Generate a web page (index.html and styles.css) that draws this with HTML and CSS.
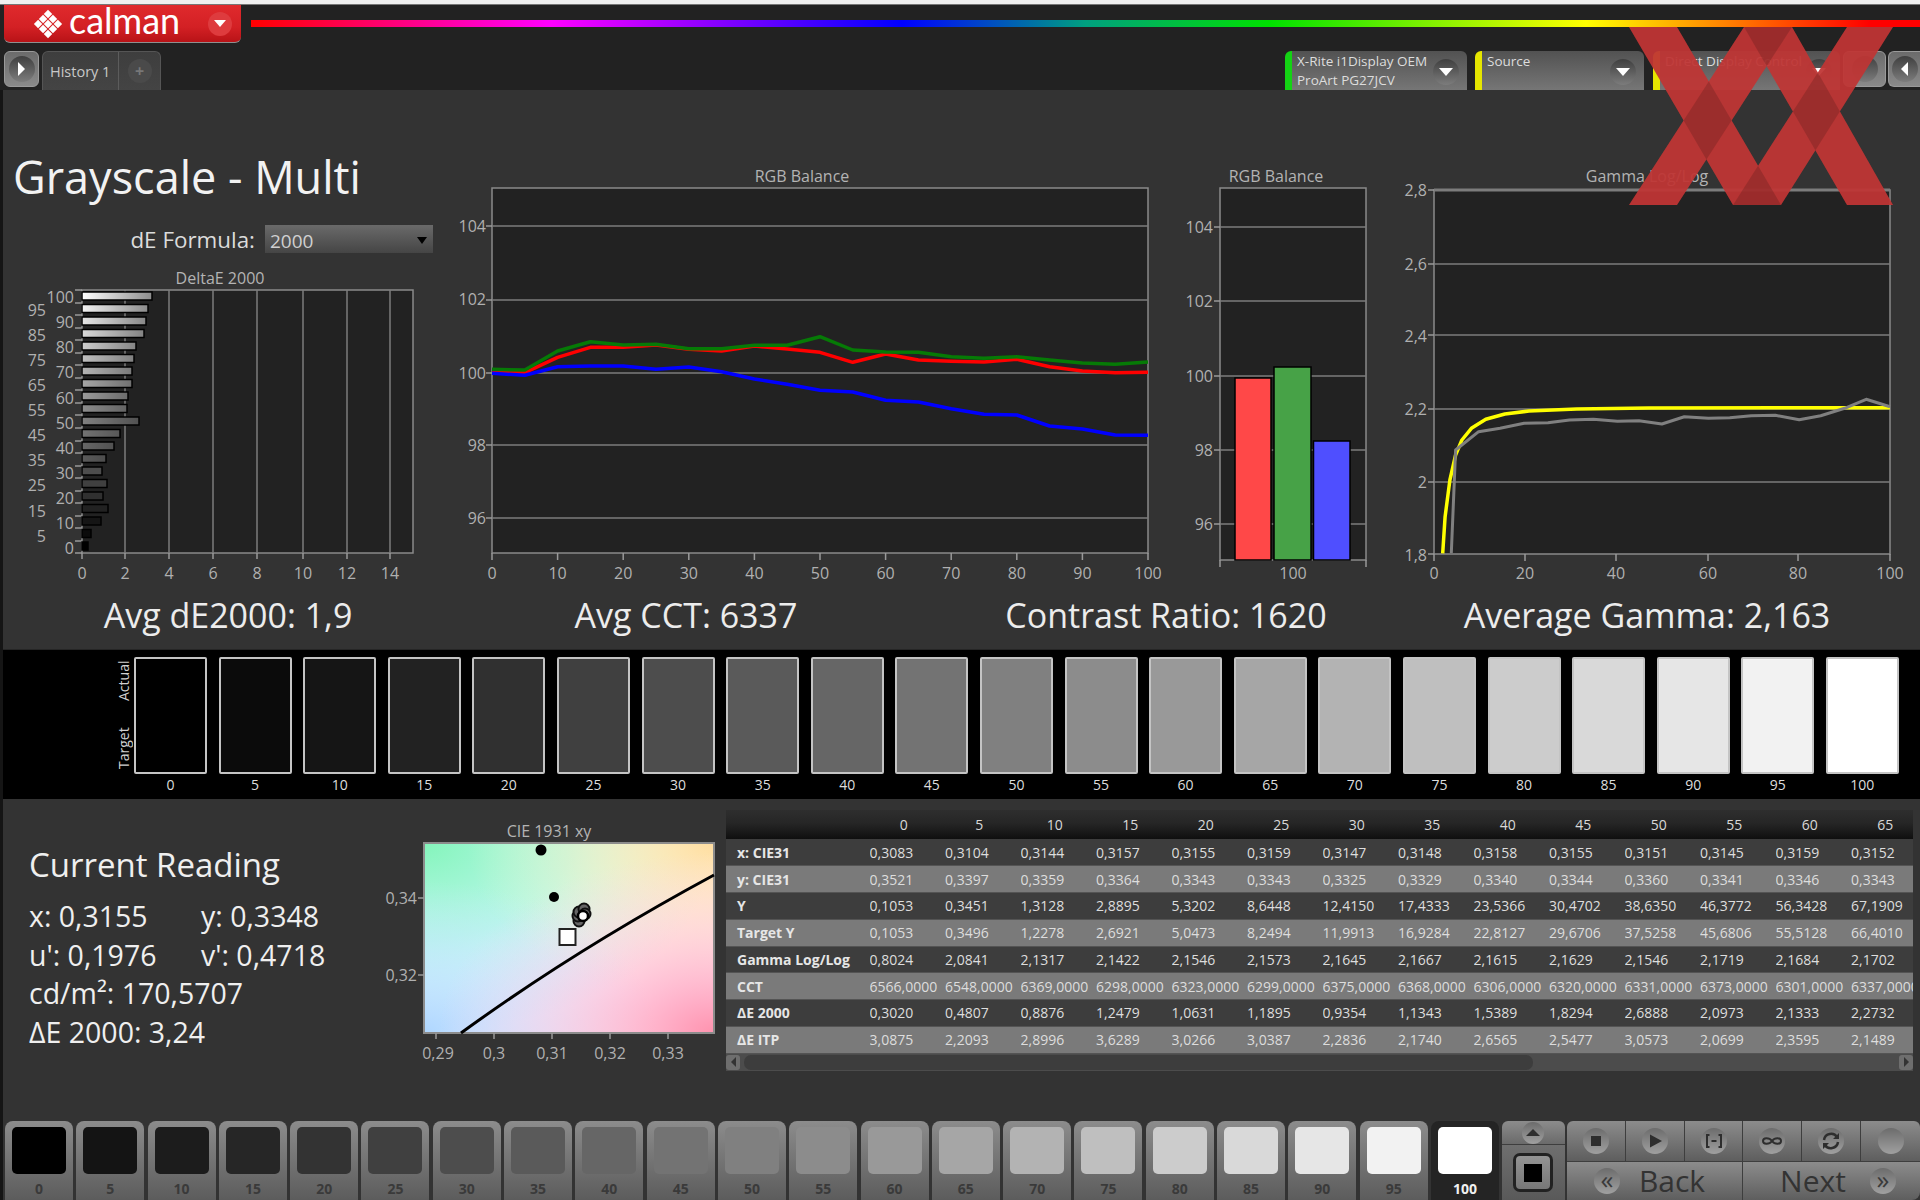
FILE: index.html
```html
<!DOCTYPE html>
<html>

<head>
  <meta charset="utf-8" />
  <title>Calman - Grayscale Multi</title>
  <link rel="stylesheet" href="styles.css">
</head>

<body>
  <div class="top-strip"></div>

  <div class="header-sec">
    <div class="logo-row">
      <div class="logo">
        <svg class="logo-mark" viewBox="0 0 30 30">
          <g transform="rotate(45 15 15)" fill="#ffffff">
            <rect x="5" y="5" width="6" height="6" />
            <rect x="12" y="5" width="6" height="6" />
            <rect x="19" y="5" width="6" height="6" />
            <rect x="5" y="12" width="6" height="6" />
            <rect x="12" y="12" width="6" height="6" />
            <rect x="19" y="12" width="6" height="6" />
            <rect x="5" y="19" width="6" height="6" />
            <rect x="12" y="19" width="6" height="6" />
            <rect x="19" y="19" width="6" height="6" />
          </g>
        </svg>
        <span class="logo-text">calman</span>
        <span class="logo-drop"><i class="caret-down white"></i></span>
      </div>
      <div class="rainbow"></div>
    </div>
    <div class="tab-row">
      <div class="side-button"><span class="knob"><i class="caret-right"></i></span></div>
      <div class="history-tab">
        <span class="history-name">History 1</span>
        <span class="history-add"><span class="add-knob">+</span></span>
      </div>
      <div class="device green wide">
        <div class="device-text">X-Rite i1Display OEM<br>ProArt PG27JCV</div>
        <span class="knob"><i class="caret-down white"></i></span>
      </div>
      <div class="device yellow mid">
        <div class="device-text">Source</div>
        <span class="knob"><i class="caret-down white"></i></span>
      </div>
      <div class="device yellow wider">
        <div class="device-text">Direct Display Control</div>
        <span class="knob"><i class="caret-down white"></i></span>
      </div>
      <div class="side-button gear"><span class="knob"></span></div>
      <div class="side-button back"><span class="knob"><i class="caret-left"></i></span></div>
    </div>
  </div>

  <div class="content">
    <div class="charts">
      <div class="left-col">
        <h1 class="page-title">Grayscale - Multi</h1>
        <div class="formula-row">
          <span class="formula-label">dE Formula:</span>
          <div class="formula-select">2000<i class="caret-down black"></i></div>
        </div>
        <svg class="chart delta-chart" viewBox="3 265 453 330">
          <defs>
            <linearGradient id="fade" gradientUnits="userSpaceOnUse" x1="82" y1="0" x2="152" y2="0">
              <stop offset="0" stop-color="#000" stop-opacity="0" />
              <stop offset="1" stop-color="#000" stop-opacity=".45" />
            </linearGradient>
          </defs>
          <text class="chart-title" x="220" y="284">DeltaE 2000</text>
          <rect class="plot" x="82" y="290" width="331" height="263" />
          <path class="grid" d="M125 290V553M169 290V553M213 290V553M257 290V553M303 290V553M347 290V553M390 290V553" />
          <path class="tick" d="M82 553v6M125 553v6M169 553v6M213 553v6M257 553v6M303 553v6M347 553v6M390 553v6" />
          <path class="tick" d="M75 290h7M75 303h7M75 315h7M75 328h7M75 340h7M75 353h7M75 365h7M75 378h7M75 390h7M75 403h7M75 415h7M75 428h7M75 441h7M75 453h7M75 466h7M75 478h7M75 491h7M75 503h7M75 516h7M75 528h7M75 541h7M75 553h7" />
          <g class="bars">
            <rect x="82" y="292" width="70" height="8" fill="#ffffff" />
            <rect x="82" y="304.5" width="66" height="8" fill="#f2f2f2" />
            <rect x="82" y="317" width="64" height="8" fill="#e6e6e6" />
            <rect x="82" y="329.5" width="62" height="8" fill="#d9d9d9" />
            <rect x="82" y="342" width="54" height="8" fill="#cccccc" />
            <rect x="82" y="354.5" width="52" height="8" fill="#bfbfbf" />
            <rect x="82" y="367" width="50" height="8" fill="#b3b3b3" />
            <rect x="82" y="379.5" width="50" height="8" fill="#a6a6a6" />
            <rect x="82" y="392" width="46" height="8" fill="#999999" />
            <rect x="82" y="404.5" width="45" height="8" fill="#8c8c8c" />
            <rect x="82" y="417" width="57" height="8" fill="#808080" />
            <rect x="82" y="429.5" width="38" height="8" fill="#737373" />
            <rect x="82" y="442" width="32" height="8" fill="#666666" />
            <rect x="82" y="454.5" width="24" height="8" fill="#5a5a5a" />
            <rect x="82" y="467" width="20" height="8" fill="#4d4d4d" />
            <rect x="82" y="479.5" width="25" height="8" fill="#404040" />
            <rect x="82" y="492" width="21" height="8" fill="#303030" />
            <rect x="82" y="504.5" width="26" height="8" fill="#222222" />
            <rect x="82" y="517" width="19" height="8" fill="#151515" />
            <rect x="82" y="529.5" width="9" height="8" fill="#0b0b0b" />
            <rect x="82" y="542" width="6" height="8" fill="#000000" />
          </g>
          <path fill="url(#fade)" d="M82 292h70v8h-70zM82 304.5h66v8h-66zM82 317h64v8h-64zM82 329.5h62v8h-62zM82 342h54v8h-54zM82 354.5h52v8h-52zM82 367h50v8h-50zM82 379.5h50v8h-50zM82 392h46v8h-46zM82 404.5h45v8h-45zM82 417h57v8h-57zM82 429.5h38v8h-38zM82 442h32v8h-32zM82 454.5h24v8h-24z" />
          <g class="axis-end">
            <text x="74" y="303">100</text>
            <text x="46" y="316">95</text>
            <text x="74" y="328">90</text>
            <text x="46" y="341">85</text>
            <text x="74" y="353">80</text>
            <text x="46" y="366">75</text>
            <text x="74" y="378">70</text>
            <text x="46" y="391">65</text>
            <text x="74" y="404">60</text>
            <text x="46" y="416">55</text>
            <text x="74" y="429">50</text>
            <text x="46" y="441">45</text>
            <text x="74" y="454">40</text>
            <text x="46" y="466">35</text>
            <text x="74" y="479">30</text>
            <text x="46" y="491">25</text>
            <text x="74" y="504">20</text>
            <text x="46" y="517">15</text>
            <text x="74" y="529">10</text>
            <text x="46" y="542">5</text>
            <text x="74" y="554">0</text>
          </g>
          <g class="axis-mid">
            <text x="82" y="579">0</text>
            <text x="125" y="579">2</text>
            <text x="169" y="579">4</text>
            <text x="213" y="579">6</text>
            <text x="257" y="579">8</text>
            <text x="303" y="579">10</text>
            <text x="347" y="579">12</text>
            <text x="390" y="579">14</text>
          </g>
        </svg>
      </div>

      <svg class="chart line-chart" viewBox="456 165 714 430">
        <text class="chart-title" x="802" y="182">RGB Balance</text>
        <rect class="plot" x="492" y="188" width="656" height="365" />
        <path class="grid" d="M492 226H1148M492 300H1148M492 373H1148M492 445H1148M492 518H1148" />
        <path class="tick" d="M492 553v7M557.6 553v7M623.2 553v7M688.8 553v7M754.4 553v7M820 553v7M885.6 553v7M951.2 553v7M1016.8 553v7M1082.4 553v7M1148 553v7M486 226h6M486 300h6M486 373h6M486 445h6M486 518h6" />
        <polyline class="curve red" points="492,372.7 524.8,372.7 557.6,357.3 590.4,347.3 623.2,347.3 656,345 688.8,349.3 721.6,351 754.4,346 787.2,349 820,352.3 852.8,362.3 885.6,354 918.4,360 951.2,361.3 984,362 1016.8,359.3 1049.6,366.7 1082.4,371 1115.2,372.7 1148,372.3" />
        <polyline class="curve green" points="492,369.3 524.8,370 557.6,351 590.4,341.7 623.2,345 656,344.3 688.8,348.7 721.6,348.7 754.4,345.3 787.2,345.3 820,336.7 852.8,350 885.6,352 918.4,352.3 951.2,356.7 984,358.3 1016.8,356.7 1049.6,360 1082.4,363 1115.2,364.3 1148,362" />
        <polyline class="curve blue" points="492,373.3 524.8,375.3 557.6,366.7 590.4,366 623.2,366 656,369.3 688.8,367 721.6,371.7 754.4,379 787.2,384.3 820,390.3 852.8,392 885.6,400.3 918.4,402 951.2,408.7 984,414.3 1016.8,415 1049.6,426 1082.4,429 1115.2,435 1148,435.3" />
        <g class="axis-end">
          <text x="486" y="232">104</text>
          <text x="486" y="305">102</text>
          <text x="486" y="379">100</text>
          <text x="486" y="451">98</text>
          <text x="486" y="524">96</text>
        </g>
        <g class="axis-mid">
          <text x="492" y="579">0</text>
          <text x="557.6" y="579">10</text>
          <text x="623.2" y="579">20</text>
          <text x="688.8" y="579">30</text>
          <text x="754.4" y="579">40</text>
          <text x="820" y="579">50</text>
          <text x="885.6" y="579">60</text>
          <text x="951.2" y="579">70</text>
          <text x="1016.8" y="579">80</text>
          <text x="1082.4" y="579">90</text>
          <text x="1148" y="579">100</text>
        </g>
      </svg>

      <svg class="chart bar-chart" viewBox="1170 165 230 430">
        <text class="chart-title" x="1276" y="182">RGB Balance</text>
        <rect class="plot" x="1220" y="188" width="146" height="372" />
        <path class="grid" d="M1220 227H1366M1220 301H1366M1220 376H1366M1220 450H1366M1220 524H1366" />
        <path class="tick" d="M1220 560v7M1366 560v7M1214 227h6M1214 301h6M1214 376h6M1214 450h6M1214 524h6" />
        <rect class="rgb-bar" x="1235" y="378" width="36" height="182" fill="#ff4848" />
        <rect class="rgb-bar" x="1274" y="367" width="37" height="193" fill="#47a247" />
        <rect class="rgb-bar" x="1313.5" y="441" width="36.5" height="119" fill="#4f4fff" />
        <g class="axis-end">
          <text x="1213" y="233">104</text>
          <text x="1213" y="307">102</text>
          <text x="1213" y="382">100</text>
          <text x="1213" y="456">98</text>
          <text x="1213" y="530">96</text>
        </g>
        <text class="axis-one" x="1293" y="579">100</text>
      </svg>

      <svg class="chart gamma-chart" viewBox="1400 165 520 430">
        <text class="chart-title" x="1647" y="182">Gamma Log/Log</text>
        <rect class="plot" x="1434" y="190" width="456" height="364" />
        <path class="grid" d="M1434 264H1890M1434 335H1890M1434 409H1890M1434 482H1890" />
        <path class="grid thick" d="M1434 190H1890" />
        <path class="tick" d="M1434 554v7M1525 554v7M1616 554v7M1708 554v7M1798 554v7M1890 554v7M1428 190h6M1428 264h6M1428 335h6M1428 409h6M1428 482h6M1428 554h6" />
        <polyline class="curve yellow-line" points="1442.7,553.3 1445.1,516.7 1449.9,480 1455.6,455 1461.9,440 1471.4,428.3 1485.8,419.3 1504.9,414 1528.9,411 1576.7,409 1648.5,408 1890,407.7" />
        <polyline class="curve gray-line" points="1451.3,553.3 1455.6,450 1478.6,431.7 1500.1,428.3 1524.1,423.3 1548,422.7 1569.5,420 1593.4,419.3 1617.4,421.3 1638.9,420.7 1661.9,424 1684.3,416.7 1708.3,418.3 1729.8,417.7 1751.3,415.7 1775.3,415.3 1799.2,419.7 1820.7,415.7 1844.6,408.3 1866.2,399.3 1890,406.7" />
        <g class="axis-end">
          <text x="1427" y="196">2,8</text>
          <text x="1427" y="270">2,6</text>
          <text x="1427" y="342">2,4</text>
          <text x="1427" y="415">2,2</text>
          <text x="1427" y="488">2</text>
          <text x="1427" y="561">1,8</text>
        </g>
        <g class="axis-mid">
          <text x="1434" y="579">0</text>
          <text x="1525" y="579">20</text>
          <text x="1616" y="579">40</text>
          <text x="1708" y="579">60</text>
          <text x="1798" y="579">80</text>
          <text x="1890" y="579">100</text>
        </g>
      </svg>
    </div>

    <div class="stats">
      <div>Avg dE2000: 1,9</div>
      <div>Avg CCT: 6337</div>
      <div>Contrast Ratio: 1620</div>
      <div>Average Gamma: 2,163</div>
    </div>

    <div class="swatch-band">
      <div class="swatch-side"><div class="side-text"><span>Target</span><span>Actual</span></div></div>
      <div class="swatch"><div class="swatch-box" style="background:#000000"></div>0</div>
      <div class="swatch"><div class="swatch-box" style="background:#0b0b0b"></div>5</div>
      <div class="swatch"><div class="swatch-box" style="background:#151515"></div>10</div>
      <div class="swatch"><div class="swatch-box" style="background:#222222"></div>15</div>
      <div class="swatch"><div class="swatch-box" style="background:#303030"></div>20</div>
      <div class="swatch"><div class="swatch-box" style="background:#404040"></div>25</div>
      <div class="swatch"><div class="swatch-box" style="background:#4d4d4d"></div>30</div>
      <div class="swatch"><div class="swatch-box" style="background:#5a5a5a"></div>35</div>
      <div class="swatch"><div class="swatch-box" style="background:#666666"></div>40</div>
      <div class="swatch"><div class="swatch-box" style="background:#737373"></div>45</div>
      <div class="swatch"><div class="swatch-box" style="background:#808080"></div>50</div>
      <div class="swatch"><div class="swatch-box" style="background:#8c8c8c"></div>55</div>
      <div class="swatch"><div class="swatch-box" style="background:#999999"></div>60</div>
      <div class="swatch"><div class="swatch-box" style="background:#a6a6a6"></div>65</div>
      <div class="swatch"><div class="swatch-box" style="background:#b3b3b3"></div>70</div>
      <div class="swatch"><div class="swatch-box" style="background:#bfbfbf"></div>75</div>
      <div class="swatch"><div class="swatch-box" style="background:#cccccc"></div>80</div>
      <div class="swatch"><div class="swatch-box" style="background:#d9d9d9"></div>85</div>
      <div class="swatch"><div class="swatch-box" style="background:#e6e6e6"></div>90</div>
      <div class="swatch"><div class="swatch-box" style="background:#f2f2f2"></div>95</div>
      <div class="swatch"><div class="swatch-box" style="background:#ffffff"></div>100</div>
    </div>

    <div class="lower">
      <div class="reading">
        <h2 class="reading-title">Current Reading</h2>
        <div class="reading-grid">
          <span>x: 0,3155</span><span>y: 0,3348</span>
          <span>u': 0,1976</span><span>v': 0,4718</span>
          <span class="span-two">cd/m²: 170,5707</span>
          <span class="span-two">ΔE 2000: 3,24</span>
        </div>
      </div>

      <svg class="chart cie-chart" viewBox="370 820 350 250">
        <defs>
          <radialGradient id="c-tl" cx="0" cy="0" r="1">
            <stop offset="0" stop-color="#84f5bb" />
            <stop offset=".5" stop-color="#a6f5e2" stop-opacity=".8" />
            <stop offset="1" stop-color="#a8f5ff" stop-opacity="0" />
          </radialGradient>
          <radialGradient id="c-tr" cx="1" cy="0" r=".85">
            <stop offset="0" stop-color="#ffdda0" />
            <stop offset="1" stop-color="#fffbc0" stop-opacity="0" />
          </radialGradient>
          <radialGradient id="c-br" cx="1" cy="1" r=".95">
            <stop offset="0" stop-color="#ff92ae" />
            <stop offset="1" stop-color="#ffc8f0" stop-opacity="0" />
          </radialGradient>
          <radialGradient id="c-bl" cx="0" cy="1" r=".8">
            <stop offset="0" stop-color="#aed6ff" />
            <stop offset="1" stop-color="#c8e8ff" stop-opacity="0" />
          </radialGradient>
        </defs>
        <text class="chart-title" x="549" y="837">CIE 1931 xy</text>
        <rect x="424" y="843" width="290" height="190" fill="#ffffff" />
        <rect x="424" y="843" width="290" height="190" fill="url(#c-tl)" />
        <rect x="424" y="843" width="290" height="190" fill="url(#c-tr)" />
        <rect x="424" y="843" width="290" height="190" fill="url(#c-bl)" />
        <rect x="424" y="843" width="290" height="190" fill="url(#c-br)" />
        <rect class="cie-frame" x="424" y="843" width="290" height="190" />
        <path class="cie-line" d="M461 1033Q575 950 714 875" />
        <circle cx="541" cy="850" r="5.5" fill="#000" />
        <circle cx="554" cy="897" r="5" fill="#000" />
        <g class="cie-cluster">
          <circle cx="579" cy="921" r="5.5" />
          <circle cx="578" cy="916" r="5.5" />
          <circle cx="579" cy="912" r="5.5" />
          <circle cx="584" cy="909" r="5.5" />
          <circle cx="585" cy="914" r="5.5" />
        </g>
        <circle cx="583" cy="916" r="5" fill="#fff" stroke="#000" stroke-width="2.5" />
        <rect x="559.5" y="929" width="16" height="16" fill="#fff" stroke="#222" stroke-width="2" />
        <path class="tick" d="M418 898h6M418 975h6M436 1033v6M494 1033v6M552 1033v6M610 1033v6M668 1033v6" />
        <g class="axis-end">
          <text x="417" y="904">0,34</text>
          <text x="417" y="981">0,32</text>
        </g>
        <g class="axis-mid">
          <text x="438" y="1059">0,29</text>
          <text x="494" y="1059">0,3</text>
          <text x="552" y="1059">0,31</text>
          <text x="610" y="1059">0,32</text>
          <text x="668" y="1059">0,33</text>
        </g>
      </svg>

      <div class="table-wrap">
        <div class="table-clip">
          <table class="data-table">
            <thead>
              <tr><th></th><th>0</th><th>5</th><th>10</th><th>15</th><th>20</th><th>25</th><th>30</th><th>35</th><th>40</th><th>45</th><th>50</th><th>55</th><th>60</th><th>65</th></tr>
            </thead>
            <tbody>
              <tr><td>x: CIE31</td><td>0,3083</td><td>0,3104</td><td>0,3144</td><td>0,3157</td><td>0,3155</td><td>0,3159</td><td>0,3147</td><td>0,3148</td><td>0,3158</td><td>0,3155</td><td>0,3151</td><td>0,3145</td><td>0,3159</td><td>0,3152</td></tr>
              <tr><td>y: CIE31</td><td>0,3521</td><td>0,3397</td><td>0,3359</td><td>0,3364</td><td>0,3343</td><td>0,3343</td><td>0,3325</td><td>0,3329</td><td>0,3340</td><td>0,3344</td><td>0,3360</td><td>0,3341</td><td>0,3346</td><td>0,3343</td></tr>
              <tr><td>Y</td><td>0,1053</td><td>0,3451</td><td>1,3128</td><td>2,8895</td><td>5,3202</td><td>8,6448</td><td>12,4150</td><td>17,4333</td><td>23,5366</td><td>30,4702</td><td>38,6350</td><td>46,3772</td><td>56,3428</td><td>67,1909</td></tr>
              <tr><td>Target Y</td><td>0,1053</td><td>0,3496</td><td>1,2278</td><td>2,6921</td><td>5,0473</td><td>8,2494</td><td>11,9913</td><td>16,9284</td><td>22,8127</td><td>29,6706</td><td>37,5258</td><td>45,6806</td><td>55,5128</td><td>66,4010</td></tr>
              <tr><td>Gamma Log/Log</td><td>0,8024</td><td>2,0841</td><td>2,1317</td><td>2,1422</td><td>2,1546</td><td>2,1573</td><td>2,1645</td><td>2,1667</td><td>2,1615</td><td>2,1629</td><td>2,1546</td><td>2,1719</td><td>2,1684</td><td>2,1702</td></tr>
              <tr><td>CCT</td><td>6566,0000</td><td>6548,0000</td><td>6369,0000</td><td>6298,0000</td><td>6323,0000</td><td>6299,0000</td><td>6375,0000</td><td>6368,0000</td><td>6306,0000</td><td>6320,0000</td><td>6331,0000</td><td>6373,0000</td><td>6301,0000</td><td>6337,0000</td></tr>
              <tr><td>ΔE 2000</td><td>0,3020</td><td>0,4807</td><td>0,8876</td><td>1,2479</td><td>1,0631</td><td>1,1895</td><td>0,9354</td><td>1,1343</td><td>1,5389</td><td>1,8294</td><td>2,6888</td><td>2,0973</td><td>2,1333</td><td>2,2732</td></tr>
              <tr><td>ΔE ITP</td><td>3,0875</td><td>2,2093</td><td>2,8996</td><td>3,6289</td><td>3,0266</td><td>3,0387</td><td>2,2836</td><td>2,1740</td><td>2,6565</td><td>2,5477</td><td>3,0573</td><td>2,0699</td><td>2,3595</td><td>2,1489</td></tr>
            </tbody>
          </table>
        </div>
        <div class="scroll-bar">
          <span class="scroll-end"><i class="caret-left small"></i></span>
          <span class="scroll-track"><span class="scroll-thumb"></span></span>
          <span class="scroll-end"><i class="caret-right small"></i></span>
        </div>
      </div>
    </div>

    <div class="footer">
      <div class="steps">
        <div class="step"><div class="step-box" style="background:#000000"></div>0</div>
        <div class="step"><div class="step-box" style="background:#141414"></div>5</div>
        <div class="step"><div class="step-box" style="background:#1c1c1c"></div>10</div>
        <div class="step"><div class="step-box" style="background:#262626"></div>15</div>
        <div class="step"><div class="step-box" style="background:#333333"></div>20</div>
        <div class="step"><div class="step-box" style="background:#404040"></div>25</div>
        <div class="step"><div class="step-box" style="background:#4d4d4d"></div>30</div>
        <div class="step"><div class="step-box" style="background:#5a5a5a"></div>35</div>
        <div class="step"><div class="step-box" style="background:#666666"></div>40</div>
        <div class="step"><div class="step-box" style="background:#737373"></div>45</div>
        <div class="step"><div class="step-box" style="background:#808080"></div>50</div>
        <div class="step"><div class="step-box" style="background:#8c8c8c"></div>55</div>
        <div class="step"><div class="step-box" style="background:#999999"></div>60</div>
        <div class="step"><div class="step-box" style="background:#a6a6a6"></div>65</div>
        <div class="step"><div class="step-box" style="background:#b3b3b3"></div>70</div>
        <div class="step"><div class="step-box" style="background:#bfbfbf"></div>75</div>
        <div class="step"><div class="step-box" style="background:#cccccc"></div>80</div>
        <div class="step"><div class="step-box" style="background:#d9d9d9"></div>85</div>
        <div class="step"><div class="step-box" style="background:#e6e6e6"></div>90</div>
        <div class="step"><div class="step-box" style="background:#f2f2f2"></div>95</div>
        <div class="step active"><div class="step-box" style="background:#ffffff"></div>100</div>
      </div>
      <div class="ctl-col">
        <div class="ctl-up"><span class="ctl-knob small-knob"><i class="caret-up"></i></span></div>
        <div class="ctl-record"><span class="record-frame"><span class="record-dot"></span></span></div>
      </div>
      <div class="ctl-panel">
        <div class="ctl-top">
          <div class="ctl-btn"><span class="ctl-knob"><svg viewBox="0 0 26 26"><rect x="8" y="8" width="10" height="10" fill="#2e2e2e" /></svg></span></div>
          <div class="ctl-btn"><span class="ctl-knob"><svg viewBox="0 0 26 26"><path d="M8 6.5L20 13L8 19.5z" fill="#2e2e2e" /></svg></span></div>
          <div class="ctl-btn"><span class="ctl-knob"><svg viewBox="0 0 26 26"><path d="M8.5 7H6v12h2.5M17.5 7H20v12h-2.5M10.5 13h5" fill="none" stroke="#2e2e2e" stroke-width="2" /></svg></span></div>
          <div class="ctl-btn"><span class="ctl-knob"><svg viewBox="0 0 26 26"><path d="M13 13C10 9 4 9.5 4 13s6 4 9 0s9-3.5 9 0s-6 4-9 0z" fill="none" stroke="#2e2e2e" stroke-width="2" /></svg></span></div>
          <div class="ctl-btn"><span class="ctl-knob"><svg viewBox="0 0 26 26"><path d="M6 12c1-7 10-8 13-3M20 14c-1 7-10 8-13 3" fill="none" stroke="#2e2e2e" stroke-width="2.5" /><path d="M21 5v6h-6zM5 21v-6h6z" fill="#2e2e2e" /></svg></span></div>
          <div class="ctl-btn"><span class="ctl-knob"></span></div>
        </div>
        <div class="ctl-bottom">
          <div class="nav-btn back-btn"><span class="ctl-knob nav-icon">«</span><span class="nav-text">Back</span></div>
          <div class="nav-btn next-btn"><span class="nav-text">Next</span><span class="ctl-knob nav-icon">»</span></div>
        </div>
      </div>
    </div>
  </div>

  <svg class="xx-mark" viewBox="1629 27 264 178">
    <defs>
      <g id="xx-shape">
        <polygon points="1629,27 1677,27 1781,205 1733,205" />
        <polygon points="1744,27 1792,27 1677,205 1629,205" />
        <polygon points="1744,27 1792,27 1893,205 1847,205" />
        <polygon points="1847,27 1893,27 1781,205 1733,205" />
      </g>
    </defs>
    <use href="#xx-shape" class="xx-base" />
    <use href="#xx-shape" class="xx-shade" />
  </svg>
</body>

</html>
```

FILE: styles.css
```css
* {
  box-sizing: border-box;
}

body {
  margin: 0;
  padding: 0;
  width: 1920px;
  height: 1200px;
  overflow: hidden;
  position: relative;
  background-color: #333333;
  color: #e8e8e8;
  font-family: "Open Sans", "Noto Sans", sans-serif;
}

/* carets */
i[class^="caret"] {
  display: block;
  width: 0;
  height: 0;
}

.caret-down {
  border-left: 7px solid transparent;
  border-right: 7px solid transparent;
  border-top: 8px solid #ffffff;
}

.caret-down.black {
  border-left-width: 5px;
  border-right-width: 5px;
  border-top: 7px solid #000000;
}

.caret-up {
  border-left: 7px solid transparent;
  border-right: 7px solid transparent;
  border-bottom: 7px solid #2e2e2e;
}

.caret-right {
  border-top: 7px solid transparent;
  border-bottom: 7px solid transparent;
  border-left: 7px solid #ffffff;
}

.caret-left {
  border-top: 7px solid transparent;
  border-bottom: 7px solid transparent;
  border-right: 7px solid #ffffff;
}

.caret-left.small {
  border-top-width: 5px;
  border-bottom-width: 5px;
  border-right: 5px solid #333333;
}

.caret-right.small {
  border-top-width: 5px;
  border-bottom-width: 5px;
  border-left: 5px solid #333333;
}

/* header */
.top-strip {
  height: 5px;
  background-color: #f0f0f0;
  border-bottom: 1px solid #777777;
}

.header-sec {
  height: 85px;
  background-color: #222222;
}

.logo-row {
  display: flex;
  align-items: flex-start;
  height: 38px;
  padding-left: 4px;
}

.logo {
  display: flex;
  align-items: center;
  width: 237px;
  height: 38px;
  padding-left: 29px;
  background: linear-gradient(#e02a2d, #d32024 60%, #b81317);
  border-bottom: 1px solid #8f8f8f;
  border-radius: 0 0 6px 6px;
}

.logo-mark {
  width: 30px;
  height: 30px;
}

.logo-text {
  margin-left: 6px;
  margin-top: -7px;
  font-family: "Lato", sans-serif;
  font-size: 36px;
  line-height: 38px;
  color: #ffffff;
}

.logo-drop {
  display: flex;
  align-items: center;
  justify-content: center;
  width: 24px;
  height: 24px;
  margin-left: auto;
  margin-right: 9px;
  border-radius: 50%;
  background-color: #de3b3e;
}

.logo-drop .caret-down {
  border-left-width: 6px;
  border-right-width: 6px;
  border-top-width: 7px;
}

.rainbow {
  flex: 1;
  height: 7px;
  margin-top: 15px;
  margin-left: 10px;
  background: linear-gradient(90deg, #ff0000 0%, #ff00ff 18%, #0000ff 39%, #00a080 50%, #00e000 61%, #ffff00 80%, #ff0000 97%);
}

.tab-row {
  display: flex;
  align-items: flex-start;
  height: 39px;
  margin-top: 8px;
  padding-left: 4px;
}

.knob {
  display: flex;
  align-items: center;
  justify-content: center;
  width: 26px;
  height: 26px;
  border-radius: 50%;
  background: linear-gradient(#3f3f3f, #7c7c7c);
}

.side-button {
  display: flex;
  align-items: center;
  justify-content: center;
  width: 35px;
  height: 36px;
  background: linear-gradient(#6b6b6b, #8a8a8a);
  border: 1px solid #9a9a9a;
  border-radius: 6px;
}

.history-tab {
  display: flex;
  width: 119px;
  height: 39px;
  margin-left: 3px;
  background: linear-gradient(#3e3e3e, #444444);
  border: 1px solid #555555;
  border-bottom: 0;
  border-radius: 6px 6px 0 0;
}

.history-name {
  width: 76px;
  padding: 11px 0 0 7px;
  font-size: 14.5px;
  line-height: 18px;
  color: #c8c8c8;
  border-right: 1px solid #5c5c5c;
  white-space: nowrap;
}

.history-add {
  display: flex;
  flex: 1;
  align-items: center;
  justify-content: center;
}

.add-knob {
  width: 24px;
  height: 24px;
  border-radius: 50%;
  background-color: #4a4a4a;
  color: #777777;
  font-size: 16px;
  font-weight: 700;
  line-height: 24px;
  text-align: center;
}

.device {
  display: flex;
  align-items: flex-start;
  height: 39px;
  padding-left: 5px;
  background: linear-gradient(#525252, #767676);
  border-radius: 6px 6px 0 0;
  overflow: hidden;
}

.device.wide {
  width: 182px;
  margin-left: auto;
}

.device.mid {
  width: 169px;
  margin-left: 8px;
}

.device.wider {
  width: 187px;
  margin-left: 9px;
}

.device.green {
  border-left: 7px solid #14d214;
}

.device.yellow {
  border-left: 7px solid #e6e600;
}

.device-text {
  flex: 1;
  padding-top: 1px;
  font-size: 13.5px;
  line-height: 19px;
  color: #dddddd;
  white-space: nowrap;
}

.device .knob {
  margin: 8px 8px 0 0;
}

.side-button.gear {
  width: 43px;
  margin-left: 3px;
}

.side-button.back {
  width: 32px;
  margin-left: 2px;
  border-right: 0;
  border-radius: 6px 0 0 6px;
}

/* main */
.content {
  border-left: 3px solid #151515;
  height: 1110px;
}

.charts {
  display: flex;
  align-items: flex-end;
  height: 505px;
}

.chart {
  display: block;
  flex: none;
  font-size: 16px;
}

.left-col {
  display: flex;
  flex-direction: column;
  justify-content: flex-end;
  width: 453px;
}

.page-title {
  margin: 0 0 23px 10px;
  font-size: 45px;
  font-weight: 400;
  line-height: 50px;
  color: #f2f2f2;
  white-space: nowrap;
}

.formula-row {
  display: flex;
  align-items: center;
  justify-content: flex-end;
  gap: 10px;
  height: 28px;
  margin-bottom: 12px;
  padding-right: 23px;
}

.formula-label {
  font-size: 22.4px;
  color: #dcdcdc;
}

.formula-select {
  display: flex;
  align-items: center;
  justify-content: space-between;
  width: 168px;
  height: 28px;
  padding: 3px 6px 0 5px;
  background: linear-gradient(#6a6a6a, #454545);
  font-size: 19px;
  color: #d0d0d0;
}

.delta-chart {
  width: 453px;
  height: 330px;
}

.line-chart {
  width: 714px;
  height: 430px;
}

.bar-chart {
  width: 230px;
  height: 430px;
}

.gamma-chart {
  width: 520px;
  height: 430px;
}

.chart-title {
  fill: #b4b4b4;
  font-size: 16px;
  text-anchor: middle;
}

.plot {
  fill: #222222;
  stroke: #8a8a8a;
  stroke-width: 1.5;
}

.grid {
  fill: none;
  stroke: #7c7c7c;
  stroke-width: 1.5;
}

.grid.thick {
  stroke-width: 3;
}

.tick {
  fill: none;
  stroke: #999999;
  stroke-width: 1.5;
}

.axis-end text {
  fill: #b0b0b0;
  text-anchor: end;
}

.axis-mid text,
.axis-one {
  fill: #b0b0b0;
  text-anchor: middle;
}

.bars rect {
  stroke: #000000;
  stroke-width: 1.5;
}

.curve {
  fill: none;
  stroke-width: 3.5;
  stroke-linejoin: round;
}

.curve.red {
  stroke: #ff0000;
}

.curve.green {
  stroke: #067a06;
}

.curve.blue {
  stroke: #0000ff;
}

.curve.yellow-line {
  stroke: #ffff00;
}

.curve.gray-line {
  stroke: #808080;
  stroke-width: 3;
}

.rgb-bar {
  stroke: #000000;
  stroke-width: 1.5;
}

.stats {
  display: grid;
  grid-template-columns: 450px 466px 494px 468px;
  height: 40px;
  font-size: 34px;
  line-height: 40px;
  color: #ececec;
  text-align: center;
  white-space: nowrap;
}

/* swatches */
.swatch-band {
  display: flex;
  height: 150px;
  margin-top: 14px;
  padding-top: 7px;
  background-color: #000000;
  border-top: 1px solid #262626;
}

.swatch-side {
  display: flex;
  justify-content: flex-end;
  flex: none;
  width: 131px;
  height: 117px;
  padding-right: 1px;
}

.side-text {
  display: flex;
  justify-content: space-between;
  height: 117px;
  padding: 5px 0 4px;
  writing-mode: vertical-rl;
  transform: rotate(180deg);
  font-size: 14px;
  line-height: 18px;
  color: #d0d0d0;
}

.swatch {
  flex: none;
  width: 73px;
  margin-right: 11.6px;
  font-size: 14px;
  line-height: 22px;
  color: #dddddd;
  text-align: center;
}

.swatch-box {
  height: 117px;
  border: 2px solid #c4c4c4;
  border-radius: 2px;
}

/* current reading, CIE and table */
.lower {
  display: flex;
  align-items: flex-start;
  height: 322px;
}

.reading {
  flex: none;
  width: 367px;
  padding: 45px 0 0 26px;
}

.reading-title {
  margin: 0;
  font-size: 33px;
  font-weight: 400;
  line-height: 42px;
  color: #efefef;
}

.reading-grid {
  display: grid;
  grid-template-columns: 172px 1fr;
  margin-top: 11px;
  font-size: 28.5px;
  line-height: 38.7px;
  color: #efefef;
  white-space: nowrap;
}

.span-two {
  grid-column: span 2;
}

.cie-chart {
  width: 350px;
  height: 250px;
  margin-top: 21px;
}

.cie-frame {
  fill: none;
  stroke: #8c8c8c;
  stroke-width: 2;
}

.cie-line {
  fill: none;
  stroke: #000000;
  stroke-width: 3;
}

.cie-cluster circle {
  fill: #666666;
  stroke: #111111;
  stroke-width: 2;
}

.table-wrap {
  flex: none;
  width: 1187px;
  margin: 11px 0 0 6px;
}

.table-clip {
  overflow: hidden;
  width: 1187px;
}

.data-table {
  width: 1200.5px;
  border-collapse: collapse;
  table-layout: fixed;
  font-size: 14px;
  color: #dddddd;
}

.data-table th,
.data-table td {
  padding: 0;
  overflow: hidden;
  white-space: nowrap;
  font-weight: 400;
  text-align: left;
}

.data-table th {
  height: 29px;
  width: 75.5px;
  padding-right: 7px;
  text-align: center;
  background: linear-gradient(#2e2e2e, #262626 45%, #0f0f0f);
  color: #d8d8d8;
}

.data-table th:first-child {
  width: 143.5px;
}

.data-table td {
  height: 26.75px;
  border-bottom: 1px solid #545454;
}

.data-table td:first-child {
  padding-left: 11px;
  font-weight: 700;
  color: #e6e6e6;
}

.data-table tbody tr:nth-child(odd) td {
  background-color: #3d3d3d;
}

.data-table tbody tr:nth-child(even) td {
  background-color: #7a7a7a;
}

.scroll-bar {
  display: flex;
  align-items: center;
  height: 17px;
  background-color: #4c4c4c;
}

.scroll-end {
  display: flex;
  align-items: center;
  justify-content: center;
  flex: none;
  width: 14px;
  height: 15px;
  background-color: #6e6e6e;
  border-radius: 3px;
}

.scroll-track {
  display: block;
  flex: 1;
  height: 15px;
  margin-left: 4px;
}

.scroll-thumb {
  display: block;
  width: 789px;
  height: 15px;
  background-color: #3d3d3d;
  border-radius: 7px;
}

/* footer */
.footer {
  display: flex;
  align-items: flex-start;
  height: 79px;
  padding-left: 2px;
}

.steps {
  display: flex;
  gap: 3.3px;
}

.step {
  flex: none;
  width: 68px;
  height: 79px;
  padding: 6px 7px 0;
  background: linear-gradient(#8c8c8c, #5c5c5c);
  border-radius: 8px 8px 0 0;
  font-size: 14px;
  font-weight: 700;
  line-height: 30px;
  color: #3a3a3a;
  text-align: center;
}

.step.active {
  background: #242424;
  color: #f0f0f0;
}

.step-box {
  height: 47px;
  border-radius: 5px;
}

.ctl-col {
  flex: none;
  width: 63px;
  height: 79px;
  margin-left: 3px;
}

.ctl-up {
  display: flex;
  align-items: center;
  justify-content: center;
  height: 24px;
  background: linear-gradient(#8c8c8c, #6a6a6a);
  border-bottom: 1px solid #3e3e3e;
  border-radius: 6px 6px 0 0;
}

.ctl-record {
  display: flex;
  align-items: center;
  justify-content: center;
  height: 55px;
  background: linear-gradient(#6f6f6f, #595959);
}

.record-frame {
  display: flex;
  align-items: center;
  justify-content: center;
  width: 40px;
  height: 39px;
  border: 3px solid #222222;
  border-radius: 7px;
  background: linear-gradient(#949494, #777777);
}

.record-dot {
  width: 18px;
  height: 18px;
  background-color: #000000;
}

.ctl-panel {
  flex: none;
  width: 353px;
  margin-left: 2px;
}

.ctl-top {
  display: grid;
  grid-template-columns: repeat(6, 1fr);
  height: 40px;
}

.ctl-btn {
  display: flex;
  align-items: center;
  justify-content: center;
  background: linear-gradient(#8c8c8c, #5e5e5e);
  border-right: 1px solid #3e3e3e;
}

.ctl-btn:first-child {
  border-radius: 6px 0 0 0;
}

.ctl-btn:last-child {
  border-right: 0;
  border-radius: 0 6px 0 0;
}

.ctl-knob {
  display: flex;
  align-items: center;
  justify-content: center;
  flex: none;
  width: 26px;
  height: 26px;
  border-radius: 50%;
  background: linear-gradient(#6c6c6c, #a0a0a0);
}

.ctl-knob svg {
  width: 26px;
  height: 26px;
}

.small-knob {
  width: 22px;
  height: 22px;
}

.ctl-bottom {
  display: grid;
  grid-template-columns: 1fr 1fr;
  height: 39px;
  border-top: 1px solid #3e3e3e;
}

.nav-btn {
  display: flex;
  align-items: center;
  height: 38px;
  background: linear-gradient(#8c8c8c, #5e5e5e);
}

.back-btn {
  padding-left: 27px;
  border-right: 1px solid #3e3e3e;
}

.next-btn {
  justify-content: flex-end;
  padding-right: 24px;
  border-radius: 0 0 8px 0;
}

.nav-icon {
  font-size: 26px;
  line-height: 26px;
  color: #3a3a3a;
  padding-bottom: 5px;
}

.nav-text {
  font-size: 30px;
  line-height: 38px;
  color: #333333;
}

.back-btn .nav-text {
  margin-left: 19px;
}

.next-btn .nav-text {
  margin-right: 24px;
}

/* watermark over the page */
.xx-mark {
  position: absolute;
  left: 1629px;
  top: 27px;
  width: 264px;
  height: 178px;
  pointer-events: none;
}

.xx-base {
  fill: #e4403f;
  opacity: .93;
}

.xx-shade {
  fill: #000000;
  fill-opacity: .15;
}
```
